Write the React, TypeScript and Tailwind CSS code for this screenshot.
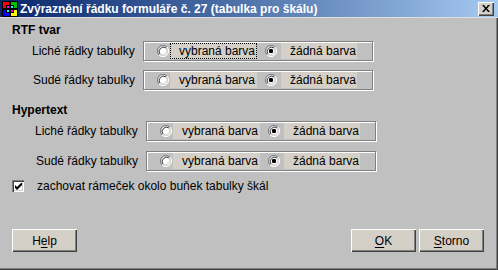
import React from "react"

function Radio({ checked }: { checked?: boolean }) {
  return (
    <svg width="12" height="12" viewBox="0 0 12 12" className="shrink-0">
      <path d="M10 2 A5.5 5.5 0 0 0 2 10" fill="none" stroke="#808080" strokeWidth="1" />
      <path d="M2 10 A5.5 5.5 0 0 0 10 2" fill="none" stroke="#ffffff" strokeWidth="1" />
      <circle cx="6" cy="6" r="4.5" fill="#ffffff" />
      <path d="M9 3 A4.3 4.3 0 0 0 3 9" fill="none" stroke="#404040" strokeWidth="1" />
      <path d="M3 9 A4.3 4.3 0 0 0 9 3" fill="none" stroke="#d4d0c8" strokeWidth="1" />
      {checked && <rect x="4" y="4" width="4" height="4" rx="1.2" fill="#000" />}
    </svg>
  )
}

function ChoiceBox({ focused }: { focused?: boolean }) {
  return (
    <div className="flex h-[20px] w-[230px] shrink-0 items-center whitespace-nowrap border border-[#808080] shadow-[inset_1px_1px_0_#fff,1px_1px_0_#fff]">
      <div className="ml-[13px] shrink-0">
        <Radio />
      </div>
      <div
        className={`ml-[1px] flex h-[16px] w-[87px] shrink-0 items-center bg-[#d4d0c8] pl-[9px] ${
          focused ? "outline outline-1 outline-dotted outline-black -outline-offset-1" : ""
        }`}
      >
        vybraná barva
      </div>
      <div className="ml-[8px] shrink-0">
        <Radio checked />
      </div>
      <div className="ml-[4px] flex h-[16px] w-[76px] shrink-0 items-center bg-[#d4d0c8] pl-[9px]">žádná barva</div>
    </div>
  )
}

function Button({ label, u, className }: { label: string; u: number; className?: string }) {
  return (
    <button
      className={`flex h-[23px] w-[65px] items-center justify-center bg-[#d4d0c8] text-[12px] shadow-[inset_1px_1px_0_#fff,inset_-1px_-1px_0_#404040,inset_-2px_-2px_0_#808080] ${className ?? ""}`}
    >
      {label.slice(0, u)}
      <span className="underline underline-offset-2">{label[u]}</span>
      {label.slice(u + 1)}
    </button>
  )
}

export default function App() {
  return (
    <div className="relative h-[270px] w-[498px] overflow-hidden bg-[#c0c0c0] font-['Liberation_Sans',Arial,sans-serif] text-[12px] leading-[14px] text-black shadow-[inset_-1px_-1px_0_#404040,inset_-2px_-2px_0_#808080]">
      {/* title bar */}
      <div className="flex h-[17px] items-center bg-gradient-to-r from-[#0a246a] to-[#a6caf0] pl-[2px] pr-[4px]">
        <svg width="16" height="16" viewBox="0 0 16 16" className="shrink-0">
          <rect x="0" y="0" width="16" height="16" fill="#000" />
          <rect x="1" y="1" width="6" height="6" fill="#ff0000" />
          <rect x="9" y="1" width="6" height="6" fill="#00c000" />
          <rect x="1" y="9" width="6" height="6" fill="#0000ff" />
          <rect x="9" y="9" width="6" height="6" fill="#ffff00" />
          <rect x="4" y="4" width="8" height="8" fill="#000" />
          <rect x="5" y="5" width="2" height="2" fill="#ff00ff" />
          <rect x="9" y="5" width="2" height="2" fill="#00ffff" />
          <rect x="5" y="9" width="2" height="2" fill="#00ffff" />
          <rect x="9" y="9" width="2" height="2" fill="#ff00ff" />
        </svg>
        <span className="ml-[2px] whitespace-nowrap text-[12px] font-bold text-white">
          Zvýraznění řádku formuláře č. 27 (tabulka pro škálu)
        </span>
        <div className="ml-auto flex h-[14px] w-[16px] items-center justify-center bg-[#d4d0c8] shadow-[inset_1px_1px_0_#fff,inset_-1px_-1px_0_#404040,inset_-2px_-2px_0_#808080]">
          <svg width="8" height="7" viewBox="0 0 8 7">
            <path d="M0 0h2l2 2.5L6 0h2L5 3.5 8 7H6L4 4.5 2 7H0l3-3.5z" fill="#000" />
          </svg>
        </div>
      </div>
      <div className="h-px bg-[#dfdfdf]" />

      <div className="flex flex-col pl-[12px]">
        <div className="mt-[5px] font-bold">RTF tvar</div>

        <div className="mt-[4px] flex items-center">
          <span className="w-[131px] shrink-0 whitespace-nowrap pl-[20px]">Liché řádky tabulky</span>
          <ChoiceBox focused />
        </div>
        <div className="mt-[9px] flex items-center">
          <span className="w-[131px] shrink-0 whitespace-nowrap pl-[21px]">Sudé řádky tabulky</span>
          <ChoiceBox />
        </div>

        <div className="mt-[13px] font-bold">Hypertext</div>

        <div className="mt-[4px] flex items-center">
          <span className="w-[134px] shrink-0 whitespace-nowrap pl-[23px]">Liché řádky tabulky</span>
          <ChoiceBox />
        </div>
        <div className="mt-[10px] flex items-center">
          <span className="w-[134px] shrink-0 whitespace-nowrap pl-[24px]">Sudé řádky tabulky</span>
          <ChoiceBox />
        </div>

        <div className="mt-[8px] flex items-center">
          <div className="flex h-[12px] w-[12px] items-center justify-center bg-white shadow-[inset_1px_1px_0_#808080,inset_2px_2px_0_#404040,inset_-1px_-1px_0_#fff,inset_-2px_-2px_0_#d4d0c8]">
            <svg width="7" height="7" viewBox="0 0 7 7">
              <path d="M0 2v3l2 2 5-5V-1L2 4z" fill="#000" />
            </svg>
          </div>
          <span className="ml-[13px]">zachovat rámeček okolo buňek tabulky škál</span>
        </div>

        <div className="mt-[36px] flex pr-[14px]">
          <Button label="Help" u={1} />
          <Button label="OK" u={0} className="ml-auto" />
          <Button label="Storno" u={0} className="ml-[3px]" />
        </div>
      </div>
    </div>
  )
}
